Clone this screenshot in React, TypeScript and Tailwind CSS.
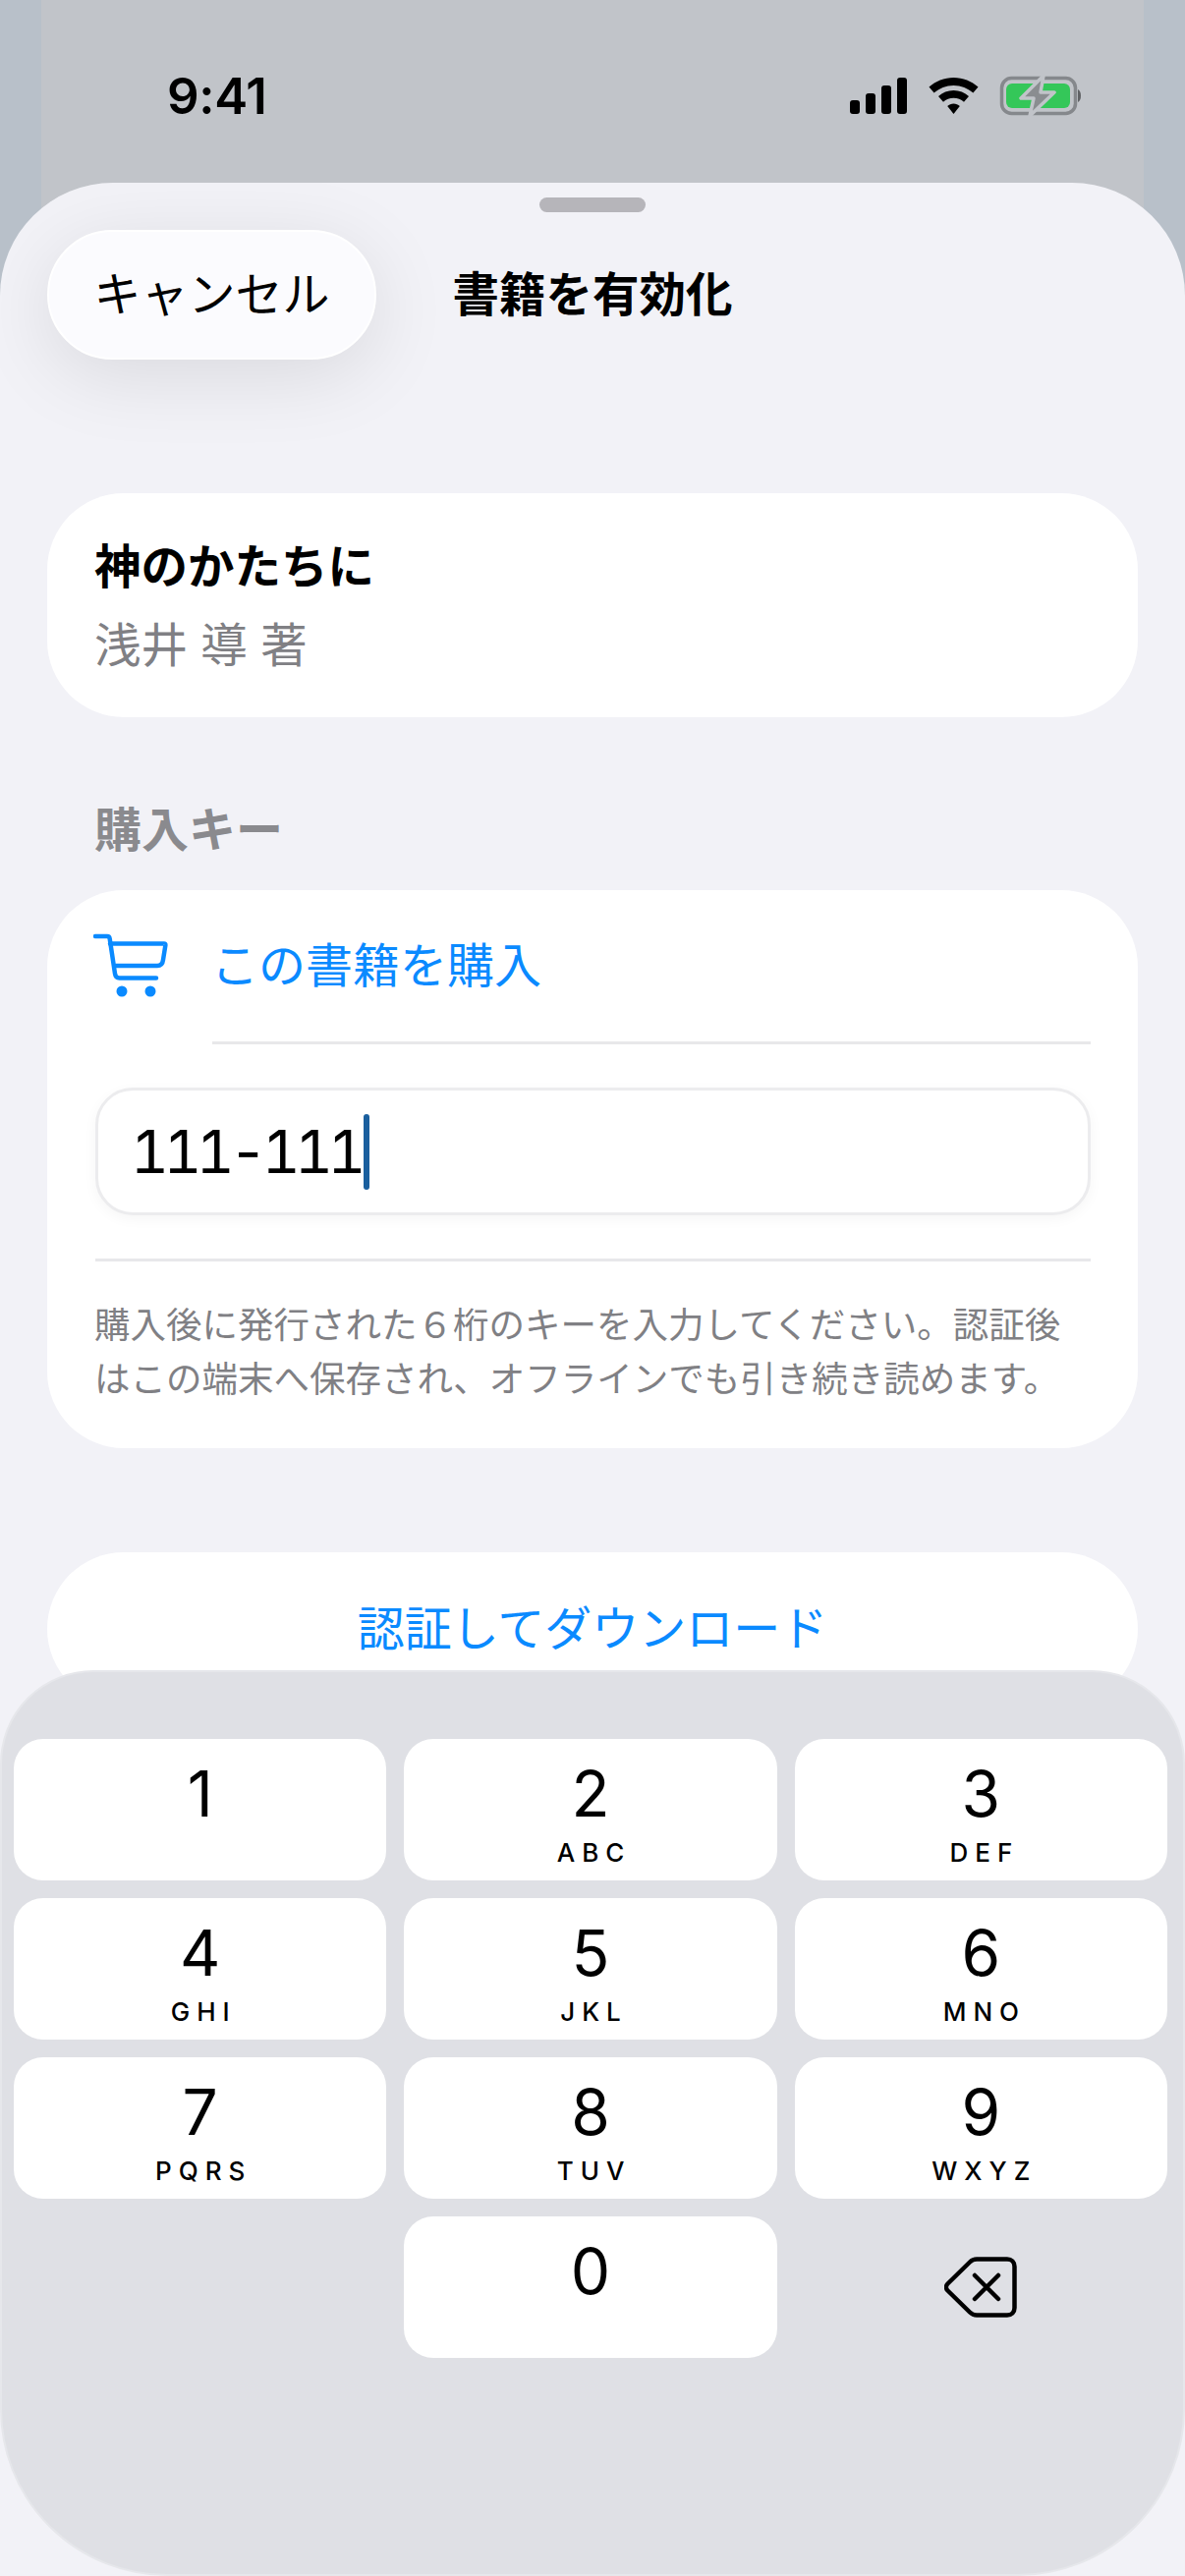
const FONT = "font-['Inter','Noto_Sans_CJK_JP',sans-serif]";

const KEYS: [string, string][] = [
  ["1", ""], ["2", "ABC"], ["3", "DEF"],
  ["4", "GHI"], ["5", "JKL"], ["6", "MNO"],
  ["7", "PQRS"], ["8", "TUV"], ["9", "WXYZ"],
];

function StatusIcons() {
  return (
    <svg width="236" height="42" viewBox="865 77 236 42" fill="none">
      <rect x="865" y="102" width="10" height="14" rx="3" fill="#000" />
      <rect x="881" y="95" width="10" height="21" rx="3" fill="#000" />
      <rect x="897" y="87" width="10" height="29" rx="3" fill="#000" />
      <rect x="913" y="79" width="10" height="37" rx="3" fill="#000" />
      <path d="M970.5 79c9.5 0 18.3 3.6 25 9.6l-5.1 6c-5.3-4.7-12.3-7.6-19.9-7.6s-14.6 2.9-19.9 7.6l-5.1-6c6.7-6 15.5-9.6 25-9.6z" fill="#000" />
      <path d="M970.5 92c5.9 0 11.3 2.2 15.5 5.9l-5 5.9c-2.8-2.5-6.5-4-10.5-4s-7.7 1.500-10.500 4l-5-5.900c4.200-3.700 9.600-5.900 15.500-5.900z" fill="#000" />
      <path d="M970.500 105.500c2.400 0 4.600.9 6.300 2.400l-6.300 8.100-6.300-8.100c1.700-1.500 3.900-2.400 6.300-2.400z" fill="#000" />
      <rect x="1019.500" y="79.500" width="75" height="36" rx="10" stroke="#85888c" strokeWidth="3.500" />
      <rect x="1024" y="85" width="65" height="25" rx="6" fill="#34c759" />
      <path d="M1097 91c2 1 3 3.500 3 6.500s-1 5.500-3 6.500z" fill="#5f6164" />
      <path d="M1062 77L1039 100H1052L1048 118L1073 94H1059L1062 77Z" fill="#8a8d90" stroke="#c1c4c9" strokeWidth="3.500" strokeLinejoin="round" />
    </svg>
  );
}

function CartIcon() {
  return (
    <svg width="76" height="66" viewBox="0 0 76 66" fill="none" className="shrink-0">
      <path d="M2 3h12c1.500 0 2.500 1 2.700 2.500L22 41c.4 3 2 4.500 4.500 4.500H64" stroke="#0a8aff" strokeWidth="4.500" strokeLinecap="round" strokeLinejoin="round" />
      <path d="M17 10.500H72c1 0 1.500.5 1.400 1.500L71 27c-.4 3.500-2.500 6-6 6H23" stroke="#0a8aff" strokeWidth="4.500" strokeLinecap="round" strokeLinejoin="round" />
      <circle cx="29" cy="59" r="5.500" fill="#0a8aff" />
      <circle cx="58" cy="59" r="5.500" fill="#0a8aff" />
    </svg>
  );
}

function BackspaceIcon() {
  return (
    <svg width="74" height="62" viewBox="0 0 74 62" fill="none">
      <path d="M3.500 27.500 L26 5.500 C28 3.500 30 2.500 33 2.500 H64 C68.500 2.500 71.500 5.500 71.500 10 V52 C71.500 56.500 68.500 59.500 64 59.500 H33 C30 59.500 28 58.500 26 56.500 L3.500 34.500 C1.500 32.500 1.500 29.500 3.500 27.500 Z" stroke="#000" strokeWidth="4.500" strokeLinejoin="round" />
      <path d="M31 19 L55 43 M55 19 L31 43" stroke="#000" strokeWidth="4.500" strokeLinecap="round" />
    </svg>
  );
}

export default function App() {
  return (
    <div className={`relative h-[2622px] w-[1206px] overflow-hidden bg-[#f2f2f7] text-black ${FONT}`}>
      {/* dimmed page behind the sheet */}
      <div className="absolute inset-x-0 top-0 h-[420px] bg-[#b8c0c9]">
        <div className="mx-[42px] h-full bg-[#c1c4c9]" />
      </div>

      <div className="relative">
        <div className="flex h-[186px] items-start justify-between pl-[170px] pr-[105px] pt-[67px]">
          <span className="text-[51px] font-semibold leading-[62px] tracking-[-0.3px]">9:41</span>
          <div className="pt-[10px]"><StatusIcons /></div>
        </div>

        <div className="flex h-[2436px] flex-col overflow-hidden rounded-t-[115px] bg-[#f2f2f7] px-[48px] pt-[15px]">
          <div className="mx-auto h-[15px] w-[108px] rounded-full bg-[#b6b5ba]" />

          <div className="mt-[18px] grid h-[132px] grid-cols-[335px_1fr_335px] items-center">
            <div className="flex h-[132px] items-center justify-center rounded-full border-2 border-white bg-[#fbfbfe] text-[48px] leading-[60px] shadow-[0_16px_80px_rgba(0,0,0,0.1)]">
              キャンセル
            </div>
            <div className="text-center text-[47.500px] font-bold leading-[60px]">書籍を有効化</div>
            <div />
          </div>

          <div className="mt-[136px] flex h-[228px] flex-col rounded-[78px] bg-white px-[48px] pt-[45px]">
            <div className="text-[47.500px] font-bold leading-[60px]">神のかたちに</div>
            <div className="mt-[20px] text-[47.500px] leading-[60px] text-[#808084]">浅井 導 著</div>
          </div>

          <div className="ml-[48px] mt-[85px] text-[48px] font-bold leading-[60px] text-[#8a8a8e]">購入キー</div>

          <div className="mt-[31px] flex h-[568px] flex-col rounded-[78px] bg-white">
            <div className="flex h-[154px] items-center pl-[47px]">
              <CartIcon />
              <span className="ml-[44px] text-[48px] leading-[60px] text-[#0a8aff]">この書籍を購入</span>
            </div>
            <div className="ml-[168px] mr-[48px] h-[3px] bg-[#e8e8ea]" />
            <div className="ml-[49px] mr-[48px] mt-[44px] flex h-[130px] items-center rounded-[38px] border-[3px] border-[#ececee] bg-white pl-[33px] shadow-[0_4px_14px_rgba(0,0,0,0.04)]">
              <span className="text-[60px] tabular-nums leading-[72px] tracking-[-5.500px]">111-111</span>
              <span className="ml-[3px] h-[77px] w-[6px] rounded-full bg-[#1a5f9e]" />
            </div>
            <div className="ml-[49px] mr-[48px] mt-[44px] h-[3px] bg-[#e8e8ea]" />
            <p className="ml-[48px] mr-[48px] mt-[38px] text-[36.500px] leading-[55px] text-[#808084]">
              購入後に発行された６桁のキーを入力してください。認証後
              <br />
              はこの端末へ保存され、オフラインでも引き続き読めます。
            </p>
          </div>

          <div className="mt-[106px] flex h-[156px] justify-center rounded-full bg-white pt-[48px] text-[48px] leading-[60px] text-[#0a8aff]">
            認証してダウンロード
          </div>
        </div>
      </div>

      {/* keyboard overlays the sheet */}
      <div className="absolute inset-x-0 bottom-0 top-[1700px] rounded-b-[170px] rounded-t-[95px] border-2 border-[#e6e7eb] bg-[#dfe0e5] pl-[12px] pr-[16px] pt-[68px]">
        <div className="grid grid-cols-3 gap-[18px]">
          {KEYS.map(([d, l]) => (
            <Key key={d} digit={d} letters={l} />
          ))}
          <div />
          <Key digit="0" letters="" />
          <div className="flex h-[144px] items-center justify-center">
            <BackspaceIcon />
          </div>
        </div>
      </div>
    </div>
  );
}

function Key({ digit, letters }: { digit: string; letters: string }) {
  return (
    <div className="flex h-[144px] flex-col items-center rounded-[30px] bg-white pt-[24px]">
      <div className="h-[64px] text-[64px] leading-[64px]">{digit}</div>
      <div className="mt-[12px] h-[32px] pl-[7px] text-[26px] font-medium leading-[32px] tracking-[7px]">{letters}</div>
    </div>
  );
}
